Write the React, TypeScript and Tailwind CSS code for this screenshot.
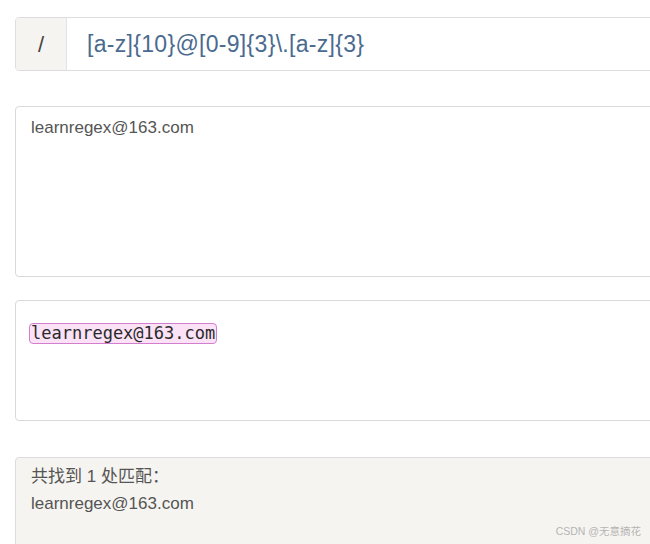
import React from 'react';

const sans = { fontFamily: "'Liberation Sans', 'Noto Sans CJK SC', sans-serif" };

const App: React.FC = () => {
  return (
    <div className="relative w-[650px] h-[544px] overflow-hidden bg-white" style={sans}>
      <div className="flex flex-col w-[660px] pl-[15px] pt-[17px]">
        {/* Regex input */}
        <div className="flex h-[54px] rounded-[4px] border border-[#dedede] overflow-hidden">
          <div className="flex w-[51px] items-center justify-center bg-[#f5f4f0] border-r border-[#e3e3e3] text-[22px] text-[#444]">
            /
          </div>
          <div className="flex flex-1 items-center pl-[20px] text-[23px] tracking-[0.3px] text-[#4a6a8f]">
            [a-z]{'{'}10{'}'}@[0-9]{'{'}3{'}'}\.[a-z]{'{'}3{'}'}
          </div>
        </div>

        {/* Source text */}
        <div className="mt-[35px] h-[171px] rounded-[4px] border border-[#d9d9d9] px-[15px] pt-[8px] text-[17px] text-[#555]">
          learnregex@163.com
        </div>

        {/* Highlighted result */}
        <div className="mt-[23px] h-[121px] rounded-[4px] border border-[#d9d9d9] pl-[13px] pt-[21px]">
          <span
            className="inline-block rounded-[4px] border border-[#d47fce] bg-[#fbe2f7] px-[1px] leading-[19px] text-[17px] text-[#2a2a2a]"
            style={{ fontFamily: "'DejaVu Sans Mono', monospace" }}
          >
            learnregex@163.com
          </span>
        </div>

        {/* Match list */}
        <div className="mt-[36px] h-[100px] rounded-t-[4px] border border-[#dcdcdc] bg-[#f5f4f0] px-[15px] pt-[5px] text-[17px] leading-[27px] text-[#555]">
          <div>共找到 1 处匹配：</div>
          <div>learnregex@163.com</div>
        </div>
      </div>

      {/* Watermark */}
      <div className="absolute right-[9px] bottom-[4px] text-[10.5px] text-[#b5b5b5]">CSDN @无意摘花</div>
    </div>
  );
};

export default App;
